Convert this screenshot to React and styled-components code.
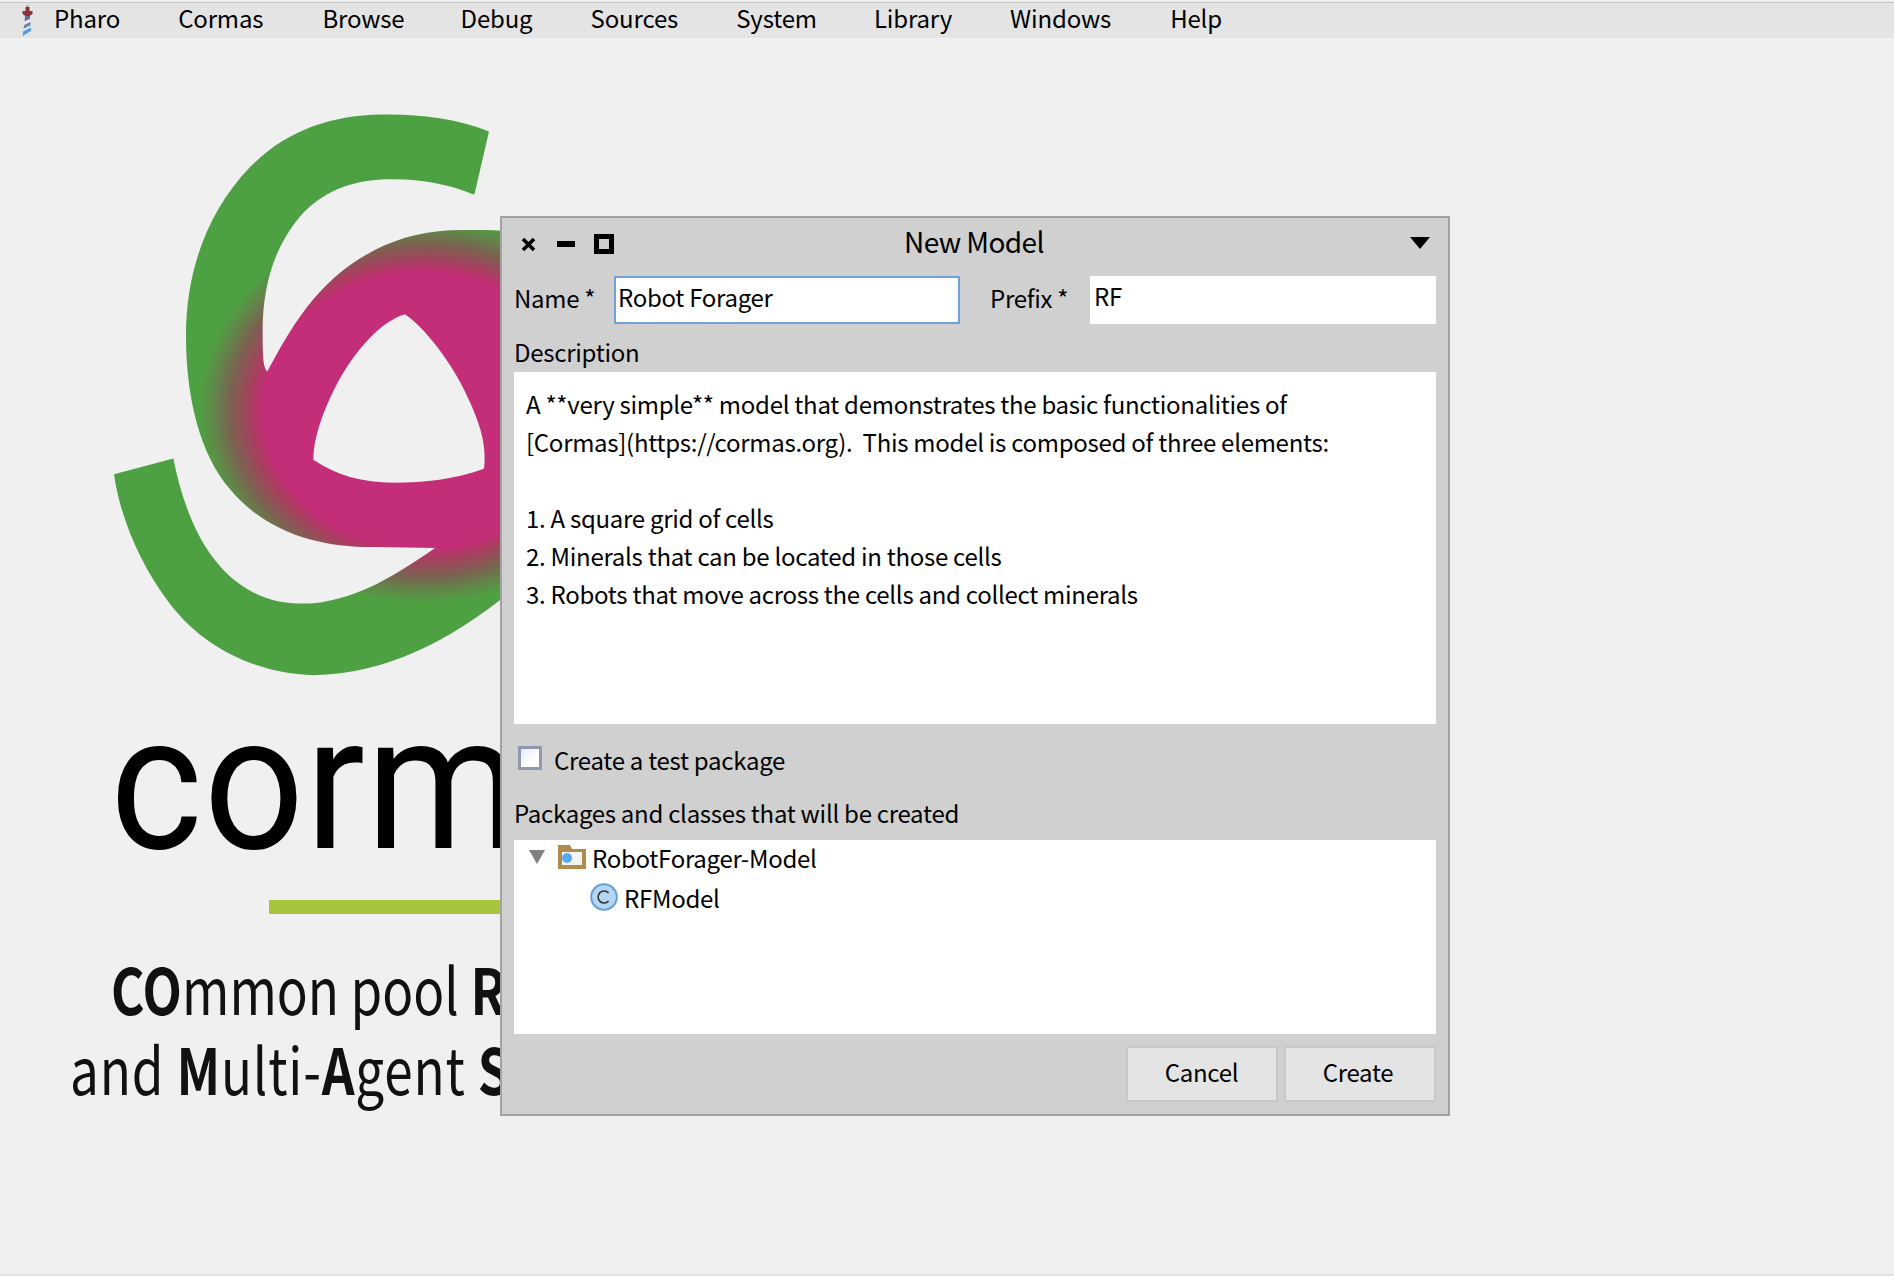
import React from "react";
import styled, { createGlobalStyle } from "styled-components";

const Global = createGlobalStyle`
  html, body { margin: 0; padding: 0; background: #f0f0f0; }
  #root { width: 1894px; height: 1276px; overflow: hidden; }
  * { box-sizing: border-box; }
`;
const UI = `"Noto Sans CJK SC", "Source Sans Pro", "Liberation Sans", sans-serif`;

const Page = styled.div`
  position: relative; width: 1894px; height: 1276px; background: #f0f0f0;
  border-bottom: 2px solid #e2e2e2; font-family: ${UI}; color: #000; overflow: hidden;
  letter-spacing: -0.28px;
`;
const MenuBar = styled.div`
  height: 36px; background: #e4e4e4; border-top: 1px solid #c6c6c6; margin-top: 2px;
  display: flex; align-items: center; padding-left: 22px; padding-bottom: 6px;
`;
const MenuIcon = styled.svg`width: 11px; height: 31px; margin: 6px 21px 0 0; flex: none; `;
const MenuItem = styled.div`
  font-size: 24px; line-height: 32px; margin-right: ${p => p.$gap}px; white-space: nowrap; letter-spacing: -0.15px;
`;
const Wallpaper = styled.div`display: flex; flex-direction: column; letter-spacing: 0; `;
const LogoMark = styled.svg`display: block; width: 460px; height: 620px; margin: 52px 0 0 60px; flex: none; `;
const WordMark = styled.div`
  font-family: "Roboto", sans-serif; font-weight: 400; font-size: 190px; line-height: 146px; height: 190px;
  margin: 0 0 0 110px; white-space: nowrap; color: #000; letter-spacing: 1px;
  transform: scaleX(0.93); transform-origin: left center;
`;
const Rule = styled.div`width: 300px; height: 14px; background: #a8c43c; margin: 0 0 0 269px; `;
const Tagline = styled.div`
  font-family: ${UI}; font-weight: 400; font-size: 64px; line-height: 80px; margin-top: ${p => p.$top || 0}px;
  margin-left: ${p => p.$left}px; white-space: nowrap; color: #111; letter-spacing: ${p => p.$ls || 0}px;
  transform: scaleX(0.8); transform-origin: left center;
  b { font-weight: 700; }
`;
const Win = styled.div`
  position: absolute; left: 500px; top: 216px; width: 950px; height: 900px;
  background: #d0d0d0; border: 2px solid #a2a2a2; padding: 0 12px 0 12px;
  display: flex; flex-direction: column; font-size: 24px;
`;
const TitleBar = styled.div`position: relative; height: 58px; display: flex; align-items: flex-start; justify-content: center; flex: none; padding-right: 2px; `;
const Title = styled.div`font-size: 28px; line-height: 46px; letter-spacing: -0.6px; `;
const Controls = styled.div`position: absolute; left: 7px; top: 16px; display: flex; align-items: center; gap: 16px; `;
const Menu = styled.svg`position: absolute; right: 6px; top: 19px; width: 20px; height: 12px; `;
const FormRow = styled.div`height: 48px; display: flex; flex: none; `;
const FieldLabel = styled.div`line-height: 44px; width: ${p => p.$w}px; flex: none; padding-left: ${p => p.$pad || 0}px; `;
const Field = styled.div`
  width: 346px; height: 48px; background: #fff; flex: none; padding: 0 0 0 ${p => p.$focus ? 2 : 4}px;
  border: ${p => p.$focus ? "2px solid #6fa1dd" : "none"}; line-height: ${p => p.$focus ? 38 : 40}px;
`;
const SectionLabel = styled.div`height: ${p => p.$h}px; line-height: ${p => p.$lh}px; flex: none; `;
const TextArea = styled.div`
  height: 352px; background: #fff; padding: 13px 12px; line-height: 38px; flex: none; white-space: pre-wrap;
`;
const CheckRow = styled.div`height: 66px; display: flex; align-items: center; flex: none; padding-left: 4px; gap: 6px; `;
const Check = styled.div`
  width: 24px; height: 24px; margin-top: 2px; border: 3px solid #8f98ad;
  background: linear-gradient(135deg, #dfeafa 0%, #ffffff 60%);
`;
const CheckText = styled.div`line-height: 40px; margin: 6px 0 0 6px; `;
const Tree = styled.div`height: 194px; background: #fff; flex: none; `;
const TreeRow = styled.div`height: ${p => p.$h}px; display: flex; align-items: center; padding-left: ${p => p.$pad}px; `;
const Arrow = styled.svg`width: 16px; height: 14px; margin-right: 13px; flex: none; `;
const FolderIcon = styled.svg`width: 28px; height: 24px; margin-right: 6px; flex: none; `;
const ClassIcon = styled.svg`width: 28px; height: 28px; margin-right: 6px; flex: none; `;
const Footer = styled.div`display: flex; justify-content: flex-end; gap: 6px; padding-top: 12px; flex: none; `;
const Btn = styled.div`
  width: 152px; height: 56px; background: #e4e4e4; border: 2px solid #c8c8c8; padding: 0 ${p => p.$right}px 4px 0;
  display: flex; align-items: center; justify-content: center; line-height: 40px;
`;

const items = [["Pharo",58],["Cormas",59],["Browse",56],["Debug",58],["Sources",58],["System",57],["Library",58],["Windows",59],["Help",0]];

export default function App() {
  return (
    <Page>
      <Global />
      <MenuBar>
        <MenuIcon viewBox="0 0 11 31">
          <path d="M4.5 0h2v2h-2z" fill="#b9a08c" />
          <path d="M3.5 2h4v4h3v3l-3 2h-4l-3-2V6h3z" fill="#8d3038" />
          <path d="M3 11h5v3l-5.4 2.6z" fill="#6a6f92" />
          <path d="M2.6 16.6L8 14v3l-5.8 3z" fill="#e6e8ee" />
          <path d="M2.2 20L8.5 17v3.4L1.6 24z" fill="#6a82b4" />
          <path d="M1.6 24l6.9-3.6v2L1.2 26.2z" fill="#e6eef6" />
          <path d="M1.2 26.2L9 22.4V26L0.6 31z" fill="#4f9fe0" />
        </MenuIcon>
        {items.map(([t, g]) => <MenuItem key={t} $gap={g}>{t}</MenuItem>)}
      </MenuBar>
      <Wallpaper>
        <LogoMark viewBox="0 0 1380 1568" preserveAspectRatio="none">
          <defs>
            <radialGradient id="ring" gradientUnits="userSpaceOnUse" cx="0" cy="0" r="1"
              gradientTransform="translate(1090 810) scale(675 490)">
              <stop offset="0.71" stopColor="#c42d77" />
              <stop offset="0.77" stopColor="#a8405f" />
              <stop offset="0.86" stopColor="#7a6350" />
              <stop offset="0.94" stopColor="#5f8a48" />
              <stop offset="1" stopColor="#4ea142" />
            </radialGradient>
          </defs>
          <path fillRule="evenodd" fill="url(#ring)" d="
            M1287 105 C1190 72 1080 60 960 62 C820 64 680 100 570 195 C440 310 378 460 378 620
            C378 780 420 920 510 1010 C620 1120 780 1158 950 1156 L1125 1158 L1500 1300 L1500 380
            C1400 355 1300 352 1170 355 C1000 362 850 430 740 550 C690 605 655 660 622 712
            C610 700 608 680 608 620 C606 500 640 400 720 320 C800 245 900 225 1000 226 C1090 226 1170 240 1243 265 Z
            M1035 567 C1110 612 1190 710 1230 790 C1262 850 1280 900 1272 958 C1180 985 1100 993 1000 993
            C910 993 830 975 760 935 C760 880 790 810 830 745 C880 665 960 585 1035 567 Z" />
          <path fill="url(#ring)" d="
            M162 972 L340 932 C375 1080 440 1190 540 1250 C610 1292 680 1302 760 1298 C900 1285 1010 1225 1125 1158
            L1500 1100 L1500 1170 L1400 1235 C1200 1380 1000 1475 760 1480
            C600 1475 440 1420 330 1300 C240 1200 180 1080 162 972 Z" />
        </LogoMark>
        <WordMark>corm</WordMark>
        <Rule />
        <Tagline $left={111} $top={33}><b>CO</b>mmon pool <b>R</b></Tagline>
        <Tagline $left={70} $ls={1}>and <b>M</b>ulti-<b>A</b>gent <b>S</b></Tagline>
      </Wallpaper>
      <Win>
        <TitleBar>
          <Controls>
            <svg width="15" height="15" viewBox="0 0 15 15"><path d="M2 2l11 11M13 2L2 13" stroke="#000" strokeWidth="3.6" /></svg>
            <svg width="18" height="6" viewBox="0 0 18 6" style={{ marginLeft: 5 }}><rect width="18" height="6" /></svg>
            <svg width="20" height="20" viewBox="0 0 20 20" style={{ marginLeft: 3 }}><rect x="2.5" y="2.5" width="15" height="15" fill="none" stroke="#000" strokeWidth="5" /></svg>
          </Controls>
          <Title>New Model</Title>
          <Menu viewBox="0 0 20 12"><path d="M0 0h20L10 12z" /></Menu>
        </TitleBar>
        <FormRow>
          <FieldLabel $w={100}>Name *</FieldLabel>
          <Field $focus>Robot Forager</Field>
          <FieldLabel $w={130} $pad={30}>Prefix *</FieldLabel>
          <Field>RF</Field>
        </FormRow>
        <SectionLabel $h={48} $lh={56}>Description</SectionLabel>
        <TextArea>{`A **very simple** model that demonstrates the basic functionalities of
[Cormas](https://cormas.org).  This model is composed of three elements:

1. A square grid of cells
2. Minerals that can be located in those cells
3. Robots that move across the cells and collect minerals`}</TextArea>
        <CheckRow><Check /><CheckText>Create a test package</CheckText></CheckRow>
        <SectionLabel $h={50} $lh={46}>Packages and classes that will be created</SectionLabel>
        <Tree>
          <TreeRow $h={34} $pad={15}>
            <Arrow viewBox="0 0 16 14"><path d="M0 0h16L8 14z" fill="#808080" /></Arrow>
            <FolderIcon viewBox="0 0 28 24">
              <path d="M0 0h12l2 4h14v20H0z" fill="#b18a4f" />
              <rect x="4" y="7" width="20" height="13" fill="#f4f4f4" />
              <circle cx="9" cy="13" r="5" fill="#55aaf5" />
            </FolderIcon>
            RobotForager-Model
          </TreeRow>
          <TreeRow $h={46} $pad={76}>
            <ClassIcon viewBox="0 0 28 28">
              <circle cx="14" cy="14" r="12.8" fill="#b5d6f2" stroke="#62a0d8" strokeWidth="2" />
              <path d="M18.6 10a6 6 0 1 0 0 8" fill="none" stroke="#333" strokeWidth="1.6" />
            </ClassIcon>
            RFModel
          </TreeRow>
        </Tree>
        <Footer><Btn $right={1}>Cancel</Btn><Btn $right={4}>Create</Btn></Footer>
      </Win>
    </Page>
  );
}
